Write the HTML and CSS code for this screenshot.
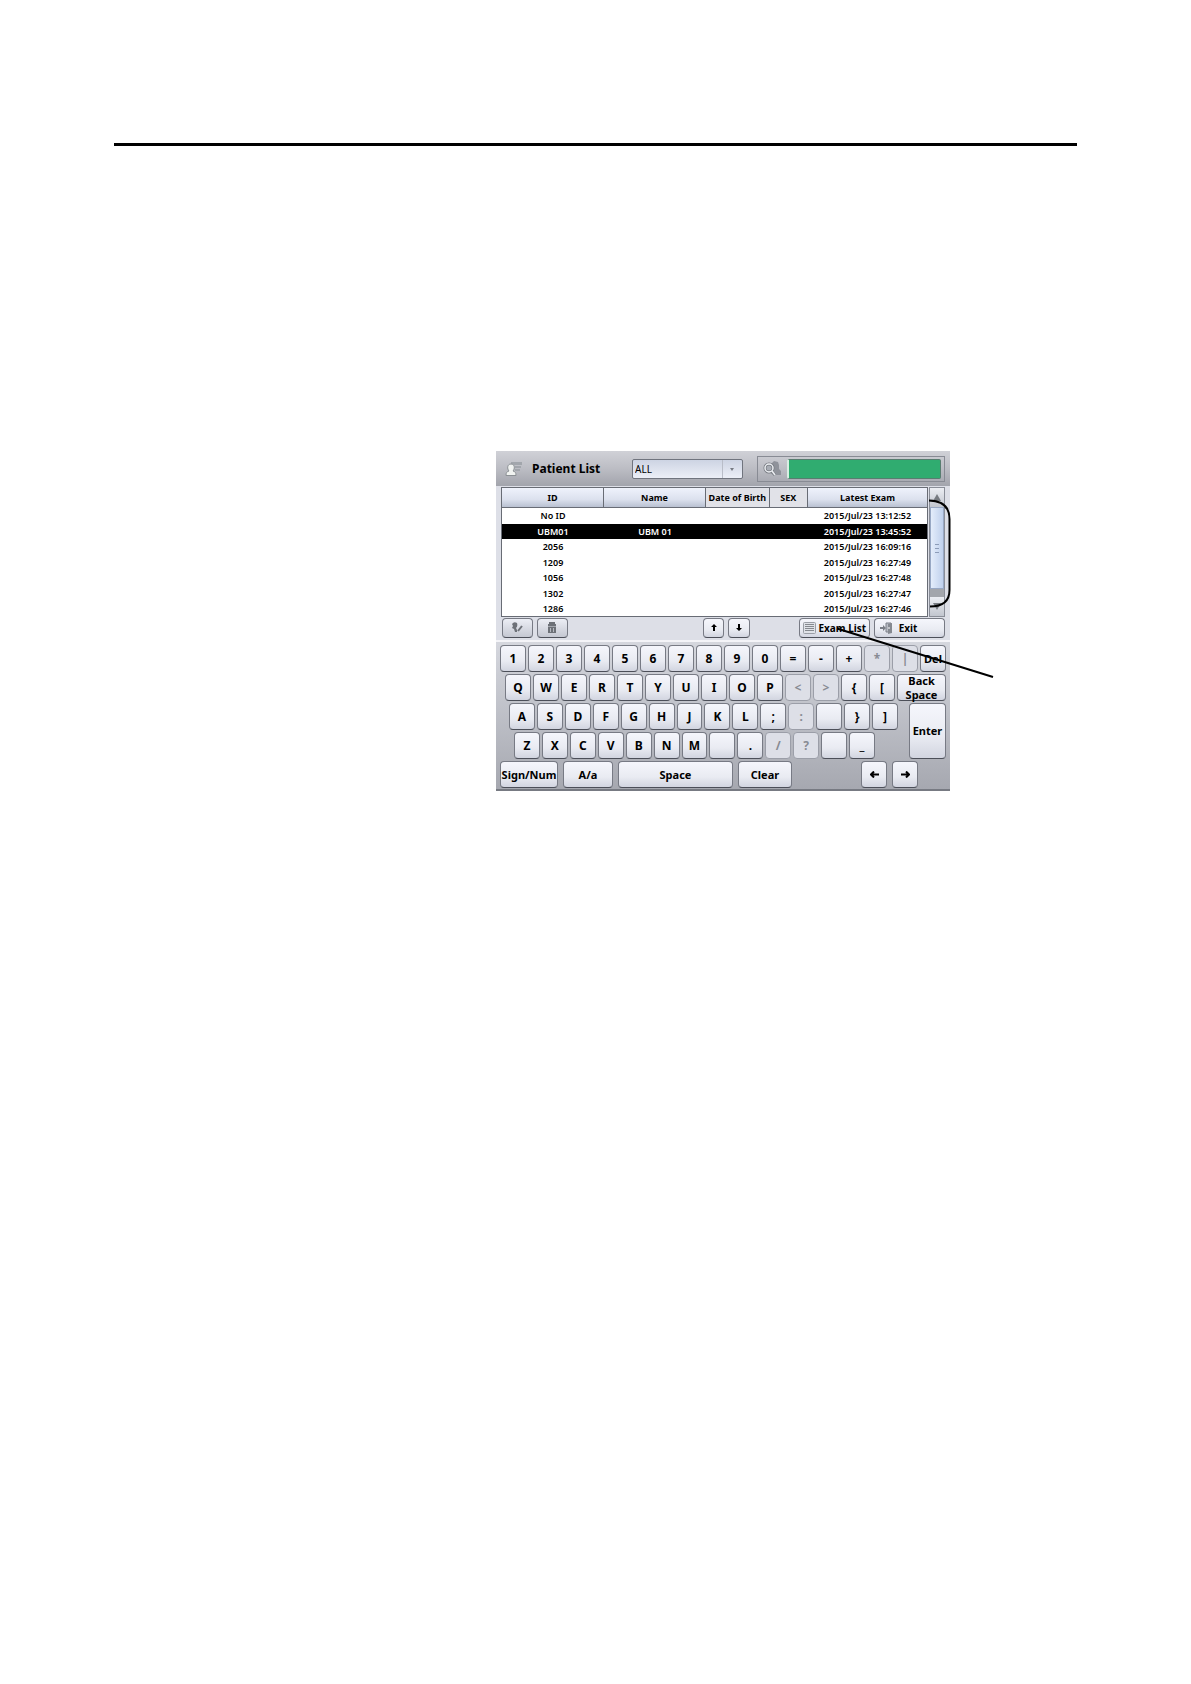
FILE: index.html
```html
<!DOCTYPE html>
<html lang="en">
<head>
<meta charset="utf-8">
<title>Patient List</title>
<link rel="stylesheet" href="styles.css">
</head>
<body>
<main class="page">
  <hr class="rule">
  <div class="figure">
    <section class="device">
      <header class="topbar">
        <svg class="topbar-icon" width="18" height="16" viewBox="0 0 18 16" aria-hidden="true">
          <path d="M6 1h11v3H6zM10 5h6v2h-6zM10 8h5v2h-5z" fill="#a2a6ac"/>
          <path d="M1 14.500c0-3 1-4 3-4.500-2-2-2-7 2-7s4 5 2 7c2 .5 3 1.500 3 4.500z" fill="#f1f3f1" stroke="#8b9094"/>
        </svg>
        <h1 class="title">Patient List</h1>
        <div class="filter">
          <select class="filter-select" aria-label="Filter"><option>ALL</option></select>
          <span class="filter-arrow" aria-hidden="true"></span>
        </div>
        <div class="search">
          <svg width="18" height="16" viewBox="0 0 18 16" aria-hidden="true">
            <path d="M8 3l3-3 4 1 1 3v4l2 2v4h-7z" fill="#8f929a"/>
            <circle cx="6" cy="7" r="4" fill="#a9adb5" stroke="#777b82" stroke-width="3"/>
            <path d="M8 10l4 4" stroke="#777b82" stroke-width="3"/>
            <circle cx="6" cy="7" r="4" fill="none" stroke="#eceef2" stroke-width="1.500"/>
            <path d="M9 10l3 4" stroke="#eceef2" stroke-width="1.500"/>
          </svg>
          <input class="search-input" type="text" aria-label="Search patients">
        </div>
      </header>

      <div class="list">
        <table class="patients">
          <colgroup><col class="col-id"><col class="col-name"><col class="col-birth"><col class="col-sex"><col class="col-exam"></colgroup>
          <thead>
            <tr>
              <th><button class="sort">ID</button></th>
              <th><button class="sort">Name</button></th>
              <th class="plain">Date of Birth</th>
              <th class="plain">SEX</th>
              <th><button class="sort">Latest Exam</button></th>
            </tr>
          </thead>
          <tbody>
            <tr><td>No ID</td><td></td><td></td><td></td><td>2015/Jul/23 13:12:52</td></tr>
            <tr class="selected"><td>UBM01</td><td>UBM 01</td><td></td><td></td><td>2015/Jul/23 13:45:52</td></tr>
            <tr><td>2056</td><td></td><td></td><td></td><td>2015/Jul/23 16:09:16</td></tr>
            <tr><td>1209</td><td></td><td></td><td></td><td>2015/Jul/23 16:27:49</td></tr>
            <tr><td>1056</td><td></td><td></td><td></td><td>2015/Jul/23 16:27:48</td></tr>
            <tr><td>1302</td><td></td><td></td><td></td><td>2015/Jul/23 16:27:47</td></tr>
            <tr><td>1286</td><td></td><td></td><td></td><td>2015/Jul/23 16:27:46</td></tr>
          </tbody>
        </table>
        <div class="scrollbar">
          <button class="scroll-btn" aria-label="Scroll up"><svg width="8" height="7" viewBox="0 0 8 7"><path d="M4 0l4 7H0z" fill="#777b81"/></svg></button>
          <div class="thumb"><i></i><i></i><i></i></div>
          <button class="scroll-btn" aria-label="Scroll down"><svg width="8" height="7" viewBox="0 0 8 7"><path d="M4 7l4-7H0z" fill="#777b81"/></svg></button>
        </div>
      </div>

      <div class="toolbar">
        <button class="btn tool" aria-label="Edit patient"><svg width="12" height="11" viewBox="0 0 12 11"><path d="M1 2q2-3 5-1 1 3-1 5l1 2v2H4L3 7 1 6l1-2z" fill="#6d7178"/><path d="M7 9l4-5" stroke="#6d7178" stroke-width="2"/></svg></button>
        <button class="btn tool" aria-label="Delete patient"><svg width="10" height="11" viewBox="0 0 10 11"><path d="M1 3h8M3 2V1h4v1" stroke="#6d7178" fill="none" stroke-width="2"/><path d="M1 4.500h8V11H1z" fill="#6d7178"/><path d="M3.500 6v4M6.500 6v4" stroke="#b5b8c0"/></svg></button>
        <button class="btn arrow previous" aria-label="Previous"><svg width="6" height="7" viewBox="0 0 6 7"><path d="M3 0l3 3H4v4H2V3H0z"/></svg></button>
        <button class="btn arrow next" aria-label="Next"><svg width="6" height="7" viewBox="0 0 6 7"><path d="M3 7l3-3H4V0H2v4H0z"/></svg></button>
        <button class="btn action exams"><svg width="13" height="12" viewBox="0 0 13 12"><rect x=".5" y=".5" width="12" height="11" rx="1" fill="#dfe2e8" stroke="#9a9ea6"/><path d="M2 2.500h9M2 4.500h9M2 6.500h9M2 8.500h9" stroke="#85898f"/></svg>Exam List</button>
        <button class="btn action exit"><svg width="13" height="12" viewBox="0 0 13 12"><path d="M6 1h5v9H6z" fill="#b8bcc4" stroke="#7b7f88"/><path d="M8 2l4-1v10l-4 1z" fill="#858991"/><path d="M0 5h3V3l3 3-3 3V7H0z" fill="#797d85"/><path d="M9 5v2" stroke="#fff"/></svg>Exit</button>
      </div>

      <div class="keyboard">
        <div class="keys">
          <button class="btn key">1</button><button class="btn key">2</button><button class="btn key">3</button><button class="btn key">4</button><button class="btn key">5</button><button class="btn key">6</button><button class="btn key">7</button><button class="btn key">8</button><button class="btn key">9</button><button class="btn key">0</button><button class="btn key">=</button><button class="btn key">-</button><button class="btn key">+</button><button class="btn key" disabled>*</button><button class="btn key" disabled>|</button><button class="btn key word">Del</button>
        </div>
        <div class="keys row-q">
          <button class="btn key">Q</button><button class="btn key">W</button><button class="btn key">E</button><button class="btn key">R</button><button class="btn key">T</button><button class="btn key">Y</button><button class="btn key">U</button><button class="btn key">I</button><button class="btn key">O</button><button class="btn key">P</button><button class="btn key" disabled>&lt;</button><button class="btn key" disabled>&gt;</button><button class="btn key">{</button><button class="btn key">[</button><button class="btn key word backspace">Back<br>Space</button>
        </div>
        <div class="lower">
          <div class="lower-rows">
            <div class="keys row-a">
              <button class="btn key">A</button><button class="btn key">S</button><button class="btn key">D</button><button class="btn key">F</button><button class="btn key">G</button><button class="btn key">H</button><button class="btn key">J</button><button class="btn key">K</button><button class="btn key">L</button><button class="btn key">;</button><button class="btn key" disabled>:</button><button class="btn key" aria-label="Blank"></button><button class="btn key">}</button><button class="btn key">]</button>
            </div>
            <div class="keys row-z">
              <button class="btn key">Z</button><button class="btn key">X</button><button class="btn key">C</button><button class="btn key">V</button><button class="btn key">B</button><button class="btn key">N</button><button class="btn key">M</button><button class="btn key" aria-label="Blank"></button><button class="btn key">.</button><button class="btn key" disabled>/</button><button class="btn key" disabled>?</button><button class="btn key" aria-label="Blank"></button><button class="btn key">_</button>
            </div>
          </div>
          <button class="btn key word enter">Enter</button>
        </div>
        <div class="row-space">
          <button class="btn key word">Sign/Num</button>
          <button class="btn key word">A/a</button>
          <button class="btn key word">Space</button>
          <button class="btn key word">Clear</button>
          <button class="btn key left" aria-label="Left"><svg width="9" height="7" viewBox="0 0 9 7"><path d="M9 3.500H2M4 0.500L1 3.500l3 3" fill="none" stroke="#000" stroke-width="2"/></svg></button>
          <button class="btn key" aria-label="Right"><svg width="9" height="7" viewBox="0 0 9 7"><path d="M0 3.500h7M5 0.500l3 3-3 3" fill="none" stroke="#000" stroke-width="2"/></svg></button>
        </div>
      </div>
    </section>
    <svg class="callouts" viewBox="0 0 454 340" aria-hidden="true">
      <path d="M433 49.500Q453.500 50 453.500 68V139Q453.500 155.500 434 155.500M341 177.500L497 226" fill="none" stroke="#000" stroke-width="2"/>
    </svg>
  </div>
</main>
</body>
</html>
```
FILE: styles.css
```css
* { box-sizing: border-box; }

body {
  margin: 0;
  background: #fff;
  color: #000;
  font-family: "Noto Sans", "Open Sans", sans-serif;
}

button, input, select { font: inherit; color: inherit; margin: 0; }
svg { display: block; flex: none; }

.page { padding: 143px 114px 80px; }

.rule { height: 3px; margin: 0 0 305px; border: 0; background: #000; }

.figure {
  display: grid;
  grid-template-columns: 382fr 454fr 127fr;
}

.device {
  grid-column: 2;
  grid-row: 1;
  min-width: 0;
  background: #dddfe7;
}

.callouts {
  grid-column: 2;
  grid-row: 1;
  z-index: 1;
  width: 100%;
  overflow: visible;
  pointer-events: none;
}

.topbar {
  display: grid;
  grid-template-columns: 18px 109fr 111fr 14px 188fr;
  align-items: center;
  height: 35px;
  padding: 0 5px 0 9px;
  background: linear-gradient(#d0d1d7, #bcbdc4 50%, #a2a4ac);
}

.title {
  margin: 0 0 0 9px;
  font-size: 12px;
  line-height: 16px;
  font-weight: 700;
  white-space: nowrap;
}

.filter { position: relative; height: 20px; }

.filter-select {
  display: block;
  width: 100%;
  height: 20px;
  padding: 0 2px;
  appearance: none;
  border: 1px solid #70747e;
  border-radius: 2px;
  background: linear-gradient(#cdd4e3, #eceff7);
  font-size: 10px;
}

.filter-arrow {
  position: absolute;
  top: 1px;
  right: 1px;
  width: 20px;
  height: 18px;
  border-left: 1px solid #b9bdc8;
  pointer-events: none;
}

.filter-arrow::after {
  content: "";
  position: absolute;
  top: 8px;
  left: 7px;
  border: 2px solid transparent;
  border-top: 3px solid #777b84;
}

.search {
  grid-column: 5;
  min-width: 0;
  display: flex;
  align-items: center;
  gap: 6px;
  height: 26px;
  padding: 0 3px 0 5px;
  border: 1px solid #888b94;
}

.search-input {
  flex: 1;
  min-width: 0;
  height: 20px;
  border: 1px solid #587d70;
  border-left: 2px solid #d9eee3;
  border-radius: 2px;
  background: #30ac70;
  font-size: 10px;
}

.list {
  display: grid;
  grid-template-columns: 427fr 16fr;
  gap: 1px;
  padding: 1px 5px 0;
}

.patients {
  width: 100%;
  table-layout: fixed;
  border-collapse: separate;
  border-spacing: 0;
  border: 1px solid #686c75;
  border-bottom: 0;
  background: #fff;
  font-size: 9px;
  line-height: 12px;
  font-weight: 600;
  text-align: center;
  white-space: nowrap;
}

.col-id, .col-name { width: 24%; }
.col-birth { width: 15%; }
.col-sex { width: 9%; }
.col-exam { width: 28%; }

.patients th {
  height: 20px;
  padding: 0;
  border-right: 1px solid #686c75;
  border-bottom: 1px solid #686c75;
  font-weight: 700;
}

.patients th:last-child { border-right: 0; }
.patients .plain { background: #e1e2e8; }

.sort {
  display: block;
  width: 100%;
  height: 19px;
  padding: 0;
  border: 0;
  background: linear-gradient(#eff2fc, #dce1ee 60%, #b9c1d1);
}

.patients td { height: 15px; padding: 0; }
.patients tbody tr:nth-child(odd) td { height: 16px; }
.patients tbody tr:last-child td { border-bottom: 1px solid #686c75; }
.selected { background: #000; color: #fff; }

.scrollbar {
  display: flex;
  flex-direction: column;
  border: 1px solid #8a8e98;
  background: #a3a6ac;
}

.scroll-btn {
  flex: none;
  display: flex;
  align-items: center;
  justify-content: center;
  height: 19px;
  padding: 0;
  border: 0;
  background: linear-gradient(#eceef3, #c2c6cf);
}

.thumb {
  flex: 1;
  display: flex;
  flex-direction: column;
  align-items: center;
  justify-content: center;
  gap: 3px;
  margin-bottom: 8px;
  border: 1px solid #98a8c4;
  background: linear-gradient(90deg, #e4edfb, #bfd0ec);
}

.thumb i { width: 4px; height: 1px; background: #8c9cb8; }

.btn {
  display: flex;
  align-items: center;
  justify-content: center;
  min-width: 0;
  padding: 0;
  border: 1px solid #777a84;
  border-bottom-color: #4c4f59;
  border-radius: 4px;
  background: linear-gradient(#f5f6fc, #e9ebf2 60%, #d2d5e0);
  font-weight: 700;
  white-space: nowrap;
}

.toolbar {
  display: grid;
  grid-template-columns: 31fr 31fr 127fr 22fr 22fr 41fr 71fr 71fr;
  gap: 4px;
  align-items: center;
  height: 25px;
  padding: 0 5px 2px 6px;
  border-bottom: 2px solid #f4f4f8;
}

.toolbar .btn { height: 20px; font-size: 10px; }
.toolbar .tool { background: linear-gradient(#eceef5, #c5c8d2); }
.previous { grid-column: 4; }
.next { grid-column: 5; }
.toolbar .action { gap: 2px; }
.exams { grid-column: 7; }
.toolbar .exit { padding-right: 22px; gap: 6px; }

.keyboard {
  display: flex;
  flex-direction: column;
  gap: 2px;
  padding: 3px 4px 1px;
  border-bottom: 2px solid #777a82;
  background: linear-gradient(#d5d7de, #a6a8b0);
}

.keys { display: flex; gap: 2px; }

.key {
  flex: 26;
  height: 27px;
  font-size: 12px;
  line-height: 14px;
}

.key:disabled { background: #dddfe7; border-color: #9b9ea8; color: #888b93; }
.word { font-size: 11px; }
.row-q { padding-left: 5px; }
.backspace { flex: 51; }

.lower {
  display: grid;
  grid-template-columns: 401fr 37fr;
  gap: 8px;
}

.lower-rows { min-width: 0; display: flex; flex-direction: column; gap: 2px; }
.row-a { padding: 0 3px 0 9px; }
.row-z { padding: 0 26px 0 14px; }
.enter { height: auto; }

.row-space {
  display: grid;
  grid-template-columns: 58fr 50fr 115fr 54fr 59fr 26fr 26fr;
  gap: 5px;
  padding-right: 28px;
}

.left { grid-column: 6; }
```
